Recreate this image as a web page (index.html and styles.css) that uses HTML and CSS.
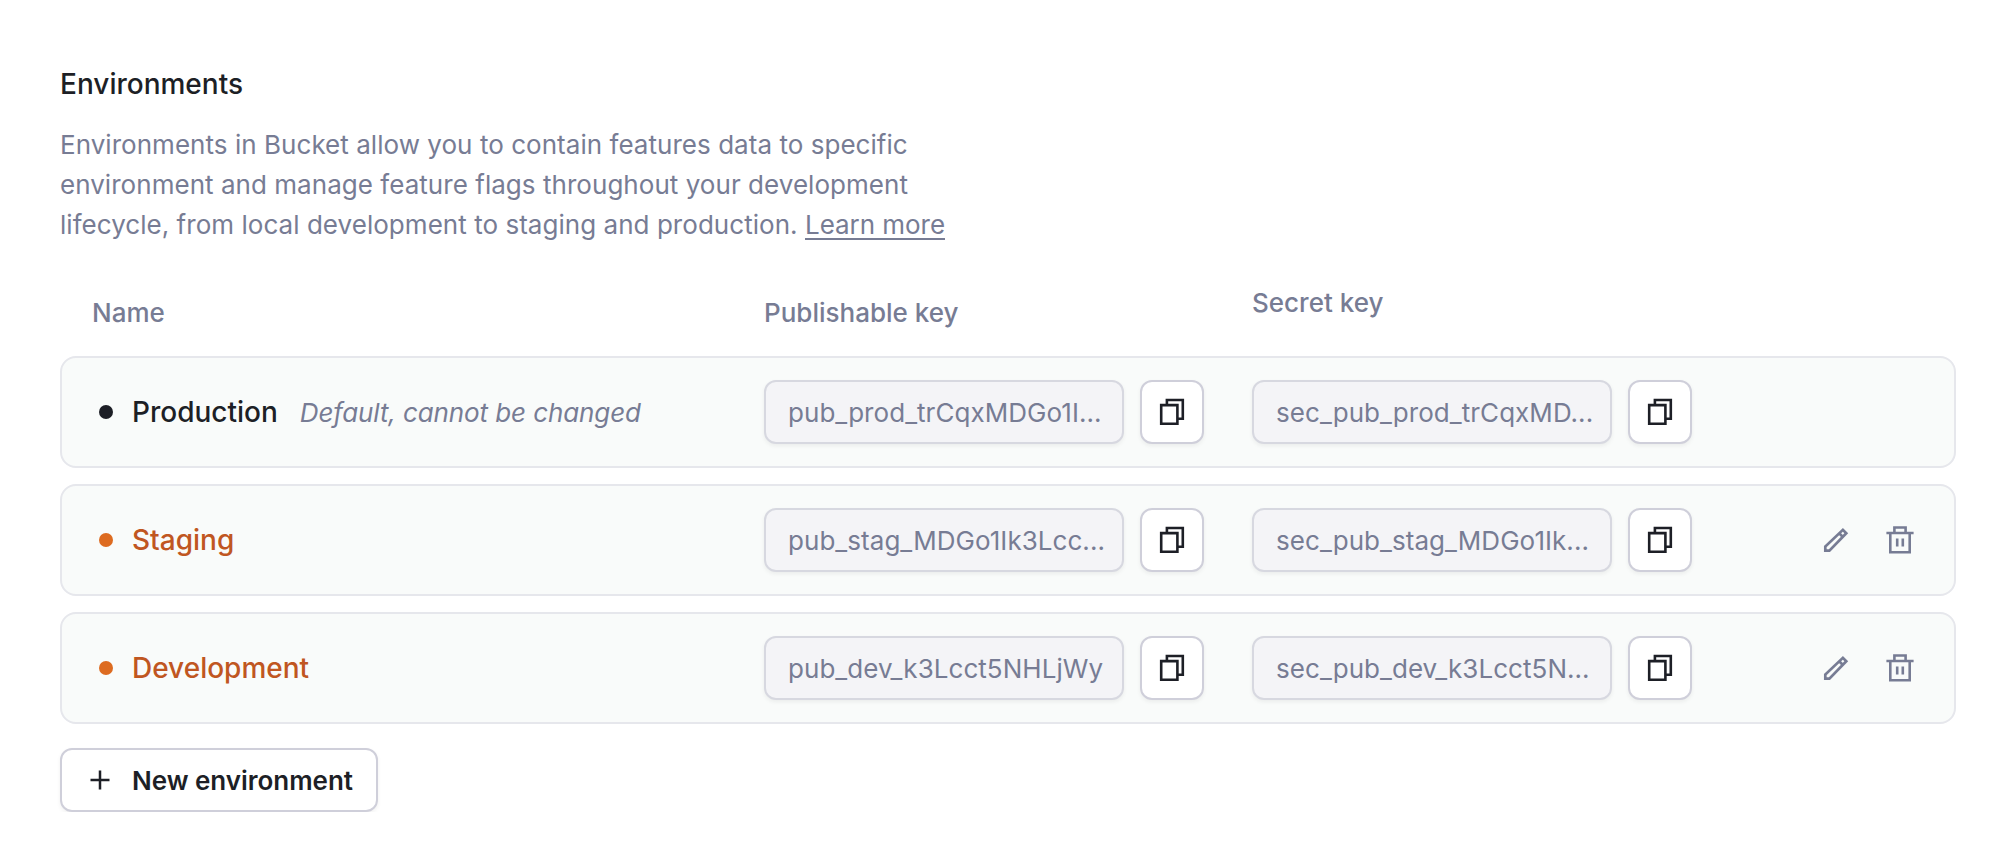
FILE: index.html
```
<!DOCTYPE html>
<html lang="en">
<head>
<meta charset="utf-8">
<title>Environments</title>
<link rel="stylesheet" href="styles.css">
</head>
<body>
<svg class="sprite" aria-hidden="true">
  <symbol id="copy" viewBox="0 0 28 28"><path d="M3.2 7.1h16.2v18.7H3.2z M8.9 7V2h15.9v18.7h-5" fill="none" stroke="currentColor" stroke-width="2.6"/></symbol>
  <symbol id="pencil" viewBox="0 0 28 28"><path d="M3.3 24.7v-4.2L20.9 3.8l3.4 3.4L7.4 24.7z M17.2 7.3l3.7 3.7" fill="none" stroke="currentColor" stroke-width="2.7"/></symbol>
  <symbol id="trash" viewBox="0 0 28 28"><path d="M.4 7h27.2 M4.3 7v19.2h19.4V7 M8.4 7V1.5h11.2V7 M11.2 12.5v8 M16.8 12.5v8" fill="none" stroke="currentColor" stroke-width="2.6"/></symbol>
</svg>
<main class="page">
  <h1 class="title">Environments</h1>
  <p class="description">Environments in Bucket allow you to contain features data to specific<br>environment and manage feature flags throughout your development<br>lifecycle, from local development to staging and production. <a class="link">Learn more</a></p>
  <div class="grid head">
    <span>Name</span><span>Publishable key</span><span class="secret">Secret key</span>
  </div>
  <section class="rows">
    <div class="grid card">
      <div class="name"><i class="dot"></i><span>Production</span><em class="note">Default, cannot be changed</em></div>
      <div class="key"><div class="field">pub_prod_trCqxMDGo1I...</div><button class="copy"><svg class="icon"><use href="#copy"/></svg></button></div>
      <div class="key"><div class="field">sec_pub_prod_trCqxMD...</div><button class="copy"><svg class="icon"><use href="#copy"/></svg></button></div>
    </div>
    <div class="grid card">
      <div class="name custom"><i class="dot"></i><span>Staging</span></div>
      <div class="key"><div class="field">pub_stag_MDGo1Ik3Lcc...</div><button class="copy"><svg class="icon"><use href="#copy"/></svg></button></div>
      <div class="key"><div class="field">sec_pub_stag_MDGo1Ik...</div><button class="copy"><svg class="icon"><use href="#copy"/></svg></button></div>
      <div class="actions"><svg class="icon"><use href="#pencil"/></svg><svg class="icon"><use href="#trash"/></svg></div>
    </div>
    <div class="grid card">
      <div class="name custom"><i class="dot"></i><span>Development</span></div>
      <div class="key"><div class="field">pub_dev_k3Lcct5NHLjWy</div><button class="copy"><svg class="icon"><use href="#copy"/></svg></button></div>
      <div class="key"><div class="field">sec_pub_dev_k3Lcct5N...</div><button class="copy"><svg class="icon"><use href="#copy"/></svg></button></div>
      <div class="actions"><svg class="icon"><use href="#pencil"/></svg><svg class="icon"><use href="#trash"/></svg></div>
    </div>
  </section>
  <button class="new"><svg class="plus" viewBox="0 0 20 20"><path d="M10 .5v19M.5 10h19" stroke="currentColor" stroke-width="2.5"/></svg><span class="new-label">New environment</span></button>
</main>
</body>
</html>
```
FILE: styles.css
```
* { box-sizing: border-box; }
body { margin: 0; background: #fff; color: #1d1f26; font: 400 26px/40px Inter, sans-serif; }
.sprite { display: none; }
.page { padding: 64px 60px 0; }
.title { margin: 0; font-size: 28px; font-weight: 500; line-height: 40px; }
.description { margin: 21px 0 0; color: #777c94; letter-spacing: .04px; }
.link { display: inline-block; height: 35px; border-bottom: 2px solid #777c94; vertical-align: top; letter-spacing: -.04px; }
.grid { display: grid; grid-template-columns: 672px 488px 488px 1fr; }
.head { margin-top: 38px; height: 73px; padding: 10px 32px 0; color: #777c94; font-weight: 500; }
.secret { margin-top: -10px; }
.rows { display: flex; flex-direction: column; gap: 16px; }
.card { height: 112px; padding: 0 30px; border: 2px solid #e6e7ec; border-radius: 16px; background: #f9fbfa; align-items: center; }
.name { display: flex; align-items: center; padding-left: 7px; font-size: 28px; font-weight: 500; }
.dot { width: 14px; height: 14px; margin-right: 19px; border-radius: 50%; background: #1d1f26; }
.custom { color: #c05621; }
.custom .dot { background: #dd6b20; }
.note { margin-left: 22px; padding-top: 2px; color: #777c94; font-size: 26px; font-weight: 400; letter-spacing: -.1px; }
.key { display: flex; gap: 16px; }
.field { width: 360px; height: 64px; padding: 11px 22px; border: 2px solid #d7d8e0; border-radius: 12px; background: #f4f4f7; color: #777c94; line-height: 40px; letter-spacing: .05px; white-space: nowrap; box-shadow: 0 2px 4px rgba(0,0,0,.06); }
.copy, .new { display: flex; align-items: center; justify-content: center; height: 64px; padding: 0; border: 2px solid #cfcfda; border-radius: 12px; background: #fff; color: #1d1f26; box-shadow: 0 2px 4px rgba(0,0,0,.06); }
.copy { width: 64px; }
.icon { display: block; width: 28px; height: 28px; }
.actions { display: flex; gap: 36px; justify-content: flex-end; padding-right: 10px; color: #777c94; }
.new { justify-content: flex-start; width: 318px; margin-top: 24px; padding-left: 28px; font: 600 26px/40px Inter, sans-serif; }
.new-label { padding-top: 2px; letter-spacing: -.03px; }
.plus { width: 20px; height: 20px; margin-right: 22px; }
```
